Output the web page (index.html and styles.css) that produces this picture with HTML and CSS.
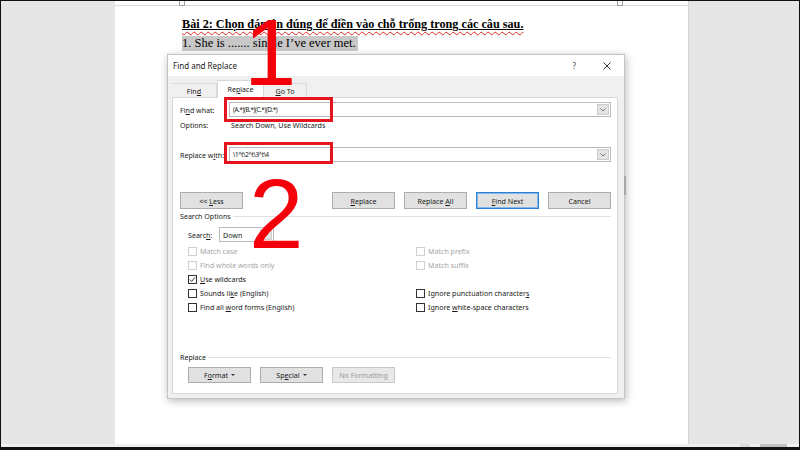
FILE: index.html
```html
<!DOCTYPE html>
<html>
<head>
    <meta charset="utf-8">
    <link rel="stylesheet" href="styles.css">
</head>
<body>
    <div class="screen">
        <div class="desk">
            <div class="gutter"></div>
            <div class="page">
                <div class="page-top"><span class="mark"></span><span class="mark"></span></div>
                <div class="doc">
                    <p class="q-title"><span class="squiggle"><span class="u">Bài 2: Chọn đáp án đúng để điền vào chỗ trống trong các câu sau.</span></span></p>
                    <p class="q-line"><span class="sel">1. She is ....... single I’ve ever met.</span></p>
                </div>
            </div>
        </div>
        <div class="hscroll"><span class="hs-a"></span><span class="hs-b"></span></div>

        <!-- Find and Replace dialog -->
        <div class="dialog">
            <div class="titlebar">
                <span class="title">Find and Replace</span>
                <span class="help">?</span>
                <span class="close">
                    <svg width="8" height="8" viewBox="0 0 8 8"><path d="M0.5 0.5L7.5 7.5M7.5 0.5L0.5 7.5" stroke="#333" stroke-width="1" fill="none"/></svg>
                </span>
            </div>
            <div class="dlg-body">
                <div class="tabs">
                    <span class="tab tab-find"><span>Fin<u>d</u></span></span>
                    <span class="tab tab-replace active"><span>Re<u>p</u>lace</span></span>
                    <span class="tab tab-goto"><span><u>G</u>o To</span></span>
                </div>
                <div class="panel">
                    <div class="field">
                        <span class="lbl">Fi<u>n</u>d what:</span>
                        <div class="combo">
                            <span class="combo-text">(A.*)(B.*)(C.*)(D.*)</span>
                            <span class="combo-btn"><svg width="6" height="4" viewBox="0 0 6 4"><path d="M0.5 0.5L3 3L5.5 0.5" stroke="#777" fill="none"/></svg></span>
                        </div>
                    </div>
                    <div class="opts">
                        <span class="lbl opt-lbl">Options:</span>
                        <span>Search Down, Use Wildcards</span>
                    </div>
                    <div class="field replace-field">
                        <span class="lbl">Replace w<u>i</u>th:</span>
                        <div class="combo">
                            <span class="combo-text">\1^t\2^t\3^t\4</span>
                            <span class="combo-btn"><svg width="6" height="4" viewBox="0 0 6 4"><path d="M0.5 0.5L3 3L5.5 0.5" stroke="#777" fill="none"/></svg></span>
                        </div>
                    </div>
                    <div class="btn-row">
                        <button class="btn"><span>&lt;&lt; <u>L</u>ess</span></button>
                        <div class="btn-group">
                            <button class="btn"><span><u>R</u>eplace</span></button>
                            <button class="btn"><span>Replace <u>A</u>ll</span></button>
                            <button class="btn default"><span><u>F</u>ind Next</span></button>
                            <button class="btn"><span>Cancel</span></button>
                        </div>
                    </div>
                    <div class="group-head"><span>Search Options</span><i></i></div>
                    <div class="search-row">
                        <span class="search-lbl">Searc<u>h</u>:</span>
                        <div class="select">
                            <span class="select-text">Down</span>
                            <span class="combo-btn"><svg width="6" height="4" viewBox="0 0 6 4"><path d="M0.5 0.5L3 3L5.5 0.5" stroke="#777" fill="none"/></svg></span>
                        </div>
                    </div>
                    <div class="checks">
                        <label class="chk off"><span class="box"></span><span>Match case</span></label>
                        <label class="chk off"><span class="box"></span><span>Match prefix</span></label>
                        <label class="chk off"><span class="box"></span><span>Find whole words only</span></label>
                        <label class="chk off"><span class="box"></span><span>Match suffix</span></label>
                        <label class="chk"><span class="box"><svg width="7" height="7" viewBox="0 0 7 7"><path d="M0.8 3.6L2.6 5.4L6.2 1.2" stroke="#222" stroke-width="0.9" fill="none"/></svg></span><span><u>U</u>se wildcards</span></label>
                        <span></span>
                        <label class="chk"><span class="box"></span><span>Sounds li<u>k</u>e (English)</span></label>
                        <label class="chk"><span class="box"></span><span>Ignore punctuation character<u>s</u></span></label>
                        <label class="chk"><span class="box"></span><span>Find all <u>w</u>ord forms (English)</span></label>
                        <label class="chk"><span class="box"></span><span>Ignore <u>w</u>hite-space characters</span></label>
                    </div>
                    <div class="group-head replace-head"><span>Replace</span><i></i></div>
                    <div class="fmt-row">
                        <button class="btn"><span>F<u>o</u>rmat</span> <b class="caret"></b></button>
                        <button class="btn"><span>Sp<u>e</u>cial</span> <b class="caret"></b></button>
                        <button class="btn disabled"><span>No Formatting</span></button>
                    </div>
                </div>
            </div>
        </div>

        <span class="vthumb"></span>
        <span class="hl-box box-find"></span>
        <span class="hl-box box-replace"></span>
        <span class="callout one">1</span>
        <span class="callout two">2</span>
    </div>
</body>
</html>
```

FILE: styles.css
```css
body {
    margin: 0;
    background: #000;
}

.screen {
    position: relative;
    width: 800px;
    height: 450px;
    box-sizing: border-box;
    border: 1px solid #111;
    border-bottom-width: 3px;
    background: #e6e6e6;
    overflow: hidden;
    display: flex;
    flex-direction: column;
}

.desk {
    display: flex;
    height: 444px;
}

.gutter {
    width: 114px;
}

.page {
    width: 573px;
    background: #fff;
    border-right: 1px solid #d4d4d4;
}

.page-top {
    height: 4px;
    border-bottom: 1px solid #dadada;
    display: flex;
    justify-content: space-between;
    padding: 0 65px 0 64px;
}

.mark {
    width: 4px;
    height: 4px;
    border: 1px solid #a0a0a0;
    border-top: none;
    background: #fff;
}

.doc {
    padding: 11px 0 0 67px;
    font-family: "Liberation Serif", "Times New Roman", serif;
    font-size: 12.5px;
    color: #000;
}

.doc p {
    margin: 0;
    line-height: 15px;
}

.q-title {
    font-weight: bold;
    font-size: 12.2px;
    margin-bottom: 4px !important;
}

.squiggle {
    text-decoration: underline wavy #d22;
    text-decoration-thickness: 1px;
    text-underline-offset: 3px;
}

.u {
    text-decoration: underline solid #000;
    text-decoration-thickness: 1px;
    text-underline-offset: 1px;
}

.sel {
    display: inline-block;
    background: #c8c8c8;
    padding-right: 2px;
}

.hscroll {
    height: 3px;
    background: #f0f0f0;
    display: flex;
    padding-left: 739px;
    gap: 10px;
}

.hs-a {
    width: 10px;
    background: #dcdcdc;
}

.hs-b {
    width: 27px;
    background: #c2c2c2;
}

/* dialog */
.dialog {
    position: absolute;
    left: 166px;
    top: 53px;
    width: 458px;
    height: 345px;
    box-sizing: border-box;
    border: 1px solid #c4c4c4;
    background: #f0f0f0;
    box-shadow: 1px 2px 8px rgba(0,0,0,0.28);
    font-family: "Noto Sans", "Open Sans", sans-serif;
    font-size: 7.1px;
    color: #1a1a1a;
}

.dialog u {
    text-underline-offset: 1px;
}

.titlebar {
    height: 21px;
    background: #fff;
    display: flex;
    align-items: center;
    padding-left: 5px;
}

.title {
    font-size: 8px;
    flex: 1;
    color: #222;
}

.help {
    font-size: 8px;
    color: #444;
    margin-right: 27px;
}

.close {
    display: flex;
    margin-right: 13px;
}

.dlg-body {
    padding: 4px 6px 0 4px;
}

.tabs {
    display: flex;
    align-items: flex-end;
    height: 18px;
    margin-bottom: -1px;
    position: relative;
}

.tab {
    height: 14px;
    box-sizing: border-box;
    display: flex;
    align-items: center;
    justify-content: center;
    border-top: 1px solid #dadada;
    border-right: 1px solid #dadada;
    background: #f0f0f0;
    margin-bottom: 1px;
}

.tab-find { width: 45px; }
.tab-replace { width: 47px; }
.tab-goto { width: 43px; }

.tab.active {
    height: 18px;
    margin-bottom: 0;
    background: #fff;
    border: 1px solid #d9d9d9;
    border-bottom: none;
    padding-bottom: 2px;
}

.panel {
    width: 446px;
    height: 297px;
    box-sizing: border-box;
    border: 1px solid #d9d9d9;
    background: #fff;
    padding: 0 6px 0 7px;
}

.field {
    display: flex;
    height: 15px;
    margin-top: 4px;
    align-items: center;
}

.replace-field {
    margin-top: 15px;
}

.lbl {
    width: 49px;
    flex: none;
}

.combo {
    flex: 1;
    height: 15px;
    box-sizing: border-box;
    border: 1px solid #bababa;
    display: flex;
    align-items: center;
    background: #fff;
}

.combo-text {
    flex: 1;
    padding-left: 3px;
    font-size: 6.2px;
    letter-spacing: -0.35px;
    color: #111;
}

.combo-btn {
    width: 12px;
    height: 11px;
    margin-right: 1px;
    background: #e3e3e3;
    border: 1px solid #cdcdcd;
    box-sizing: border-box;
    display: flex;
    align-items: center;
    justify-content: center;
}

.opts {
    display: flex;
    height: 14px;
    margin-top: 1px;
    align-items: center;
}

.opt-lbl {
    width: 51px;
}

.btn-row {
    display: flex;
    justify-content: space-between;
    height: 17px;
    margin-top: 30px;
}

.btn-group {
    display: flex;
    gap: 9px;
}

.btn {
    width: 63px;
    height: 17px;
    box-sizing: border-box;
    border: 1px solid #adadad;
    background: #e1e1e1;
    font-family: inherit;
    font-size: 7.1px;
    color: #1a1a1a;
    padding: 0;
    display: flex;
    align-items: center;
    justify-content: center;
    gap: 3px;
}

.btn.default {
    border-color: #2a7fd4;
    box-shadow: inset 0 0 0 1px #8ab8e6;
}

.btn.disabled {
    background: #e8e8e8;
    border-color: #c8c8c8;
    color: #9a9a9a;
}

.group-head {
    display: flex;
    align-items: center;
    height: 14px;
    gap: 2px;
}

.group-head i {
    flex: 1;
    border-top: 1px solid #e0e0e0;
}

.search-row {
    display: flex;
    align-items: center;
    height: 15px;
    margin-top: 4px;
    padding-left: 8px;
}

.search-lbl {
    width: 31px;
}

.select {
    width: 55px;
    height: 15px;
    box-sizing: border-box;
    border: 1px solid #bababa;
    display: flex;
    align-items: center;
}

.select-text {
    flex: 1;
    padding-left: 3px;
}

.checks {
    display: grid;
    grid-template-columns: 228px 1fr;
    grid-auto-rows: 14px;
    margin-top: 2px;
    padding-left: 8px;
}

.chk {
    display: flex;
    align-items: center;
    gap: 3px;
}

.box {
    width: 9px;
    height: 9px;
    box-sizing: border-box;
    border: 1px solid #333;
    background: #fff;
    display: flex;
    align-items: center;
    justify-content: center;
}

.chk.off {
    color: #a6a6a6;
}

.chk.off .box {
    border-color: #cfcfcf;
}

.replace-head {
    margin-top: 36px;
}

.fmt-row {
    display: flex;
    gap: 9px;
    margin-top: 3px;
    padding-left: 8px;
}

.fmt-row .btn {
    height: 16px;
}

.caret {
    width: 0;
    height: 0;
    border-left: 2px solid transparent;
    border-right: 2px solid transparent;
    border-top: 2px solid #333;
}

.vthumb {
    position: absolute;
    left: 623px;
    top: 175px;
    width: 2px;
    height: 19px;
    background: #a9a9a9;
}

/* annotations drawn over the screenshot */
.hl-box {
    position: absolute;
    box-sizing: border-box;
    border: 3px solid #e5131d;
}

.box-find {
    left: 223px;
    top: 96px;
    width: 109px;
    height: 25px;
}

.box-replace {
    left: 223px;
    top: 141px;
    width: 109px;
    height: 22px;
}

.callout {
    position: absolute;
    font-family: "Liberation Sans", Arial, sans-serif;
    line-height: 1;
    color: #f5000a;
}

.callout.one {
    left: 243px;
    top: 5px;
    font-size: 94px;
}

.callout.two {
    left: 248px;
    top: 164px;
    font-size: 98px;
}
```
